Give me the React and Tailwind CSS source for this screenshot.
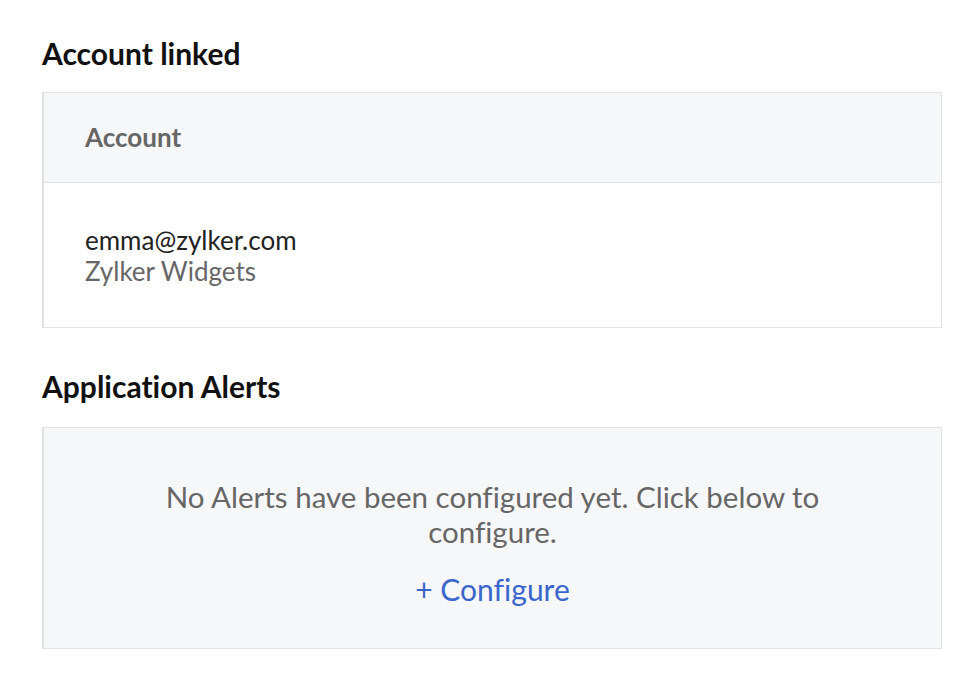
export default function App() {
  return (
    <div className="w-[974px] h-[686px] bg-white pt-[35px] pl-[42px] pr-[32px] [font-variant-ligatures:none]" style={{ fontFamily: "Lato, 'Open Sans', sans-serif" }}>
      <h2 className="text-[30px] leading-[36px] font-bold text-[#111]">Account linked</h2>
      <div className="mt-[21px] border border-[#e0e2e5] border-l-2 border-l-[#dfe1e4]">
        <div className="h-[90px] flex items-center pl-[41px] bg-[#f6f7f9] border-b border-[#e0e2e5]">
          <span className="text-[26px] font-bold text-[#666]">Account</span>
        </div>
        <div className="h-[144px] flex flex-col justify-center pl-[41px] pt-[2px]">
          <div className="text-[26px] leading-[31px] text-[#222]">emma@zylker.com</div>
          <div className="text-[26px] leading-[31px] text-[#666]">Zylker Widgets</div>
        </div>
      </div>
      <h2 className="mt-[40px] text-[30px] leading-[36px] font-bold text-[#111]">Application Alerts</h2>
      <div className="mt-[23px] h-[222px] bg-[#f6f7f9] border border-[#e0e2e5] border-l-2 border-l-[#dfe1e4] flex flex-col items-center justify-center px-[110px] pt-[10px]">
        <p className="text-[29.5px] leading-[35px] text-[#666] text-center">No Alerts have been configured yet. Click below to configure.</p>
        <a className="mt-[23px] text-[30px] leading-[35px] text-[#3a66cc]">+ Configure</a>
      </div>
    </div>
  );
}
